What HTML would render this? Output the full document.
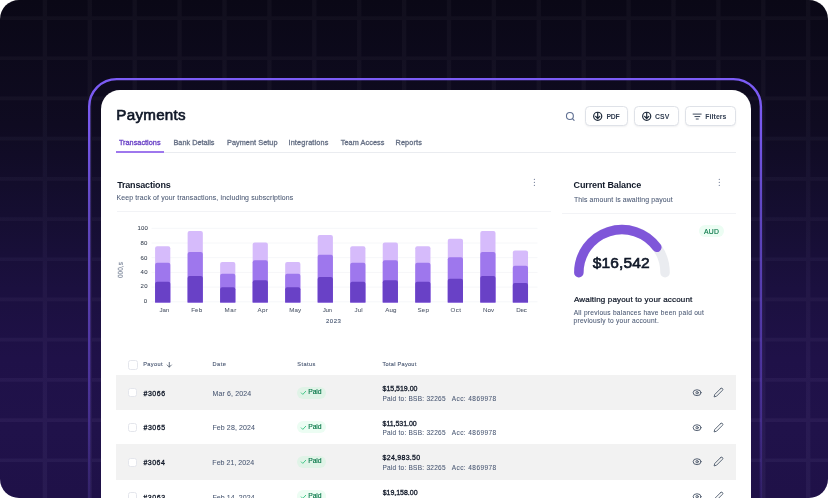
<!DOCTYPE html>
<html lang="en"><head><meta charset="utf-8"><title>Payments</title>
<style>
html,body{margin:0;padding:0;background:#fff;}
body{width:828px;height:498px;overflow:hidden;position:relative;font-family:"Liberation Sans",Arial,sans-serif;}
.bg{position:absolute;left:0;top:0;width:828px;height:498px;border-radius:19px;overflow:hidden;background:linear-gradient(180deg,#0a0816 0%,#0f0b21 25%,#150e31 43%,#1b103f 58%,#1f1148 72%,#20124a 86%,#1f1148 100%);}
.bg svg{position:absolute;left:0;top:0;}
.card{position:absolute;left:101px;top:90px;width:650px;height:420px;background:#fff;border-radius:19px 19px 0 0;}
.t{position:absolute;white-space:nowrap;line-height:1;}
.abs{position:absolute;}
.btn{position:absolute;top:106.1px;height:20.3px;box-sizing:border-box;border:1px solid #dfe2e8;border-radius:4.5px;background:#fff;box-shadow:0 1px 2px rgba(16,24,40,.06);}
.hl{position:absolute;height:1px;background:#eaecf0;}
.row{position:absolute;left:116.3px;width:619.3px;height:34.85px;background:#f2f2f2;}
.cb{position:absolute;left:128.4px;width:9px;height:9px;box-sizing:border-box;border:0.8px solid #e4e6ec;border-radius:2.5px;background:#fff;}
.badge{position:absolute;left:296.9px;width:29.3px;height:12.3px;border-radius:6.2px;background:#e0f3e7;}
.badge.w{background:#ecfdf3;}
#texts{position:absolute;left:0;top:0;width:828px;height:498px;will-change:transform;}

</style></head><body>
<div class="bg"><svg width="828" height="498" viewBox="0 0 828 498">
<defs><filter id="gb" x="-2%" y="-2%" width="104%" height="104%"><feGaussianBlur stdDeviation="0.6"/></filter>
<linearGradient id="gg" x1="0" y1="0" x2="0" y2="498" gradientUnits="userSpaceOnUse"><stop offset="0" stop-color="#e6e0ff" stop-opacity="0.031"/><stop offset="0.45" stop-color="#d6ccff" stop-opacity="0.036"/><stop offset="1" stop-color="#cfc4ff" stop-opacity="0.054"/></linearGradient></defs>
<path fill="url(#gg)" filter="url(#gb)" d="M42.75 0h4.3v498h-4.3zM87.65 0h4.3v498h-4.3zM132.55 0h4.3v498h-4.3zM177.45 0h4.3v498h-4.3zM222.35 0h4.3v498h-4.3zM267.25 0h4.3v498h-4.3zM312.15 0h4.3v498h-4.3zM357.05 0h4.3v498h-4.3zM401.95 0h4.3v498h-4.3zM446.85 0h4.3v498h-4.3zM491.75 0h4.3v498h-4.3zM536.65 0h4.3v498h-4.3zM581.55 0h4.3v498h-4.3zM626.45 0h4.3v498h-4.3zM671.35 0h4.3v498h-4.3zM716.25 0h4.3v498h-4.3zM761.15 0h4.3v498h-4.3zM806.05 0h4.3v498h-4.3zM0 16.20h828v3.7h-828zM0 56.40h828v3.7h-828zM0 96.60h828v3.7h-828zM0 136.80h828v3.7h-828zM0 177.00h828v3.7h-828zM0 217.20h828v3.7h-828zM0 257.40h828v3.7h-828zM0 297.60h828v3.7h-828zM0 337.80h828v3.7h-828zM0 378.00h828v3.7h-828zM0 418.20h828v3.7h-828zM0 458.40h828v3.7h-828z"/>
<defs><linearGradient id="fg" x1="0" y1="78" x2="0" y2="498" gradientUnits="userSpaceOnUse"><stop offset="0" stop-color="#7c5cf6"/><stop offset="0.12" stop-color="#7c5cf6" stop-opacity="0.95"/><stop offset="0.31" stop-color="#7a5af4" stop-opacity="0.74"/><stop offset="0.53" stop-color="#7856f0" stop-opacity="0.6"/><stop offset="0.77" stop-color="#7652ee" stop-opacity="0.42"/><stop offset="1" stop-color="#744fec" stop-opacity="0.14"/></linearGradient></defs>
<rect x="89.2" y="79.1" width="671.7" height="460" rx="27.5" ry="27.5" fill="none" stroke="url(#fg)" stroke-width="2.4"/>
</svg></div>
<div class="card"></div>
<svg class="abs" style="left:560px;top:104px" width="180" height="26" viewBox="560 104 180 26">
<g fill="none" stroke="#5f6f92" stroke-width="1.1" stroke-linecap="round"><circle cx="569.9" cy="116" r="3.45"/><path d="M572.7 118.8 L574.1 120.3"/></g>
</svg>
<div class="btn" style="left:585px;width:43px"></div>
<div class="btn" style="left:634.3px;width:44.4px"></div>
<div class="btn" style="left:684.5px;width:51.2px"></div>
<svg class="abs" style="left:580px;top:104px" width="160" height="26" viewBox="580 104 160 26"><g fill="none" stroke="#1d2939" stroke-width="1.2" stroke-linecap="round" stroke-linejoin="round">
<circle cx="597.7" cy="116.3" r="4.05"/><path d="M597.7 112.6 V118.4 M595.60 116.4 L597.7 118.5 L599.80 116.4"/>
<circle cx="646.7" cy="116.3" r="4.05"/><path d="M646.7 112.6 V118.4 M644.60 116.4 L646.7 118.5 L648.80 116.4"/>
<path stroke="#344054" stroke-width="0.95" d="M693.1 114.1 H701.2 M694.9 116.55 H699.8 M696.2 119 H698.3"/>
</g></svg>
<div class="hl" style="left:116.5px;top:152px;width:619.2px"></div>
<div class="abs" style="left:116.3px;top:150.7px;width:47.7px;height:2px;background:#9e77ed"></div>
<div class="hl" style="left:116.5px;top:211px;width:434.3px;background:#f2f3f6"></div>
<div class="hl" style="left:562.3px;top:213px;width:173.5px;background:#f2f3f6"></div>
<svg class="abs" style="left:110px;top:215px" width="450" height="100" viewBox="110 215 450 100">
<g stroke="#f6f7f9" stroke-width="1">
<path d="M151.5 228.30 H537.5"/>
<path d="M151.5 243.00 H537.5"/>
<path d="M151.5 257.70 H537.5"/>
<path d="M151.5 272.40 H537.5"/>
<path d="M151.5 287.10 H537.5"/>
<path d="M151.5 301.80 H537.5"/>
</g>
<path fill="#d6bbfb" d="M155.10 302.5 V248.30 Q155.10 246.30 157.10 246.30 H168.30 Q170.30 246.30 170.30 248.30 V302.5 Z"/>
<path fill="#9e77ed" d="M155.10 302.5 V264.80 Q155.10 262.80 157.10 262.80 H168.30 Q170.30 262.80 170.30 264.80 V302.5 Z"/>
<path fill="#6941c6" d="M155.10 302.5 V283.70 Q155.10 281.70 157.10 281.70 H168.30 Q170.30 281.70 170.30 283.70 V302.5 Z"/>
<path fill="#d6bbfb" d="M187.62 302.5 V232.90 Q187.62 230.90 189.62 230.90 H200.82 Q202.82 230.90 202.82 232.90 V302.5 Z"/>
<path fill="#9e77ed" d="M187.62 302.5 V254.10 Q187.62 252.10 189.62 252.10 H200.82 Q202.82 252.10 202.82 254.10 V302.5 Z"/>
<path fill="#6941c6" d="M187.62 302.5 V277.90 Q187.62 275.90 189.62 275.90 H200.82 Q202.82 275.90 202.82 277.90 V302.5 Z"/>
<path fill="#d6bbfb" d="M220.14 302.5 V264.00 Q220.14 262.00 222.14 262.00 H233.34 Q235.34 262.00 235.34 264.00 V302.5 Z"/>
<path fill="#9e77ed" d="M220.14 302.5 V275.80 Q220.14 273.80 222.14 273.80 H233.34 Q235.34 273.80 235.34 275.80 V302.5 Z"/>
<path fill="#6941c6" d="M220.14 302.5 V289.20 Q220.14 287.20 222.14 287.20 H233.34 Q235.34 287.20 235.34 289.20 V302.5 Z"/>
<path fill="#d6bbfb" d="M252.66 302.5 V244.50 Q252.66 242.50 254.66 242.50 H265.86 Q267.86 242.50 267.86 244.50 V302.5 Z"/>
<path fill="#9e77ed" d="M252.66 302.5 V262.20 Q252.66 260.20 254.66 260.20 H265.86 Q267.86 260.20 267.86 262.20 V302.5 Z"/>
<path fill="#6941c6" d="M252.66 302.5 V282.20 Q252.66 280.20 254.66 280.20 H265.86 Q267.86 280.20 267.86 282.20 V302.5 Z"/>
<path fill="#d6bbfb" d="M285.18 302.5 V264.00 Q285.18 262.00 287.18 262.00 H298.38 Q300.38 262.00 300.38 264.00 V302.5 Z"/>
<path fill="#9e77ed" d="M285.18 302.5 V275.80 Q285.18 273.80 287.18 273.80 H298.38 Q300.38 273.80 300.38 275.80 V302.5 Z"/>
<path fill="#6941c6" d="M285.18 302.5 V289.20 Q285.18 287.20 287.18 287.20 H298.38 Q300.38 287.20 300.38 289.20 V302.5 Z"/>
<path fill="#d6bbfb" d="M317.70 302.5 V237.00 Q317.70 235.00 319.70 235.00 H330.90 Q332.90 235.00 332.90 237.00 V302.5 Z"/>
<path fill="#9e77ed" d="M317.70 302.5 V256.70 Q317.70 254.70 319.70 254.70 H330.90 Q332.90 254.70 332.90 256.70 V302.5 Z"/>
<path fill="#6941c6" d="M317.70 302.5 V279.00 Q317.70 277.00 319.70 277.00 H330.90 Q332.90 277.00 332.90 279.00 V302.5 Z"/>
<path fill="#d6bbfb" d="M350.22 302.5 V248.30 Q350.22 246.30 352.22 246.30 H363.42 Q365.42 246.30 365.42 248.30 V302.5 Z"/>
<path fill="#9e77ed" d="M350.22 302.5 V264.80 Q350.22 262.80 352.22 262.80 H363.42 Q365.42 262.80 365.42 264.80 V302.5 Z"/>
<path fill="#6941c6" d="M350.22 302.5 V283.70 Q350.22 281.70 352.22 281.70 H363.42 Q365.42 281.70 365.42 283.70 V302.5 Z"/>
<path fill="#d6bbfb" d="M382.74 302.5 V244.50 Q382.74 242.50 384.74 242.50 H395.94 Q397.94 242.50 397.94 244.50 V302.5 Z"/>
<path fill="#9e77ed" d="M382.74 302.5 V262.20 Q382.74 260.20 384.74 260.20 H395.94 Q397.94 260.20 397.94 262.20 V302.5 Z"/>
<path fill="#6941c6" d="M382.74 302.5 V282.20 Q382.74 280.20 384.74 280.20 H395.94 Q397.94 280.20 397.94 282.20 V302.5 Z"/>
<path fill="#d6bbfb" d="M415.26 302.5 V248.30 Q415.26 246.30 417.26 246.30 H428.46 Q430.46 246.30 430.46 248.30 V302.5 Z"/>
<path fill="#9e77ed" d="M415.26 302.5 V264.80 Q415.26 262.80 417.26 262.80 H428.46 Q430.46 262.80 430.46 264.80 V302.5 Z"/>
<path fill="#6941c6" d="M415.26 302.5 V283.70 Q415.26 281.70 417.26 281.70 H428.46 Q430.46 281.70 430.46 283.70 V302.5 Z"/>
<path fill="#d6bbfb" d="M447.78 302.5 V240.80 Q447.78 238.80 449.78 238.80 H460.98 Q462.98 238.80 462.98 240.80 V302.5 Z"/>
<path fill="#9e77ed" d="M447.78 302.5 V259.30 Q447.78 257.30 449.78 257.30 H460.98 Q462.98 257.30 462.98 259.30 V302.5 Z"/>
<path fill="#6941c6" d="M447.78 302.5 V280.80 Q447.78 278.80 449.78 278.80 H460.98 Q462.98 278.80 462.98 280.80 V302.5 Z"/>
<path fill="#d6bbfb" d="M480.30 302.5 V232.90 Q480.30 230.90 482.30 230.90 H493.50 Q495.50 230.90 495.50 232.90 V302.5 Z"/>
<path fill="#9e77ed" d="M480.30 302.5 V254.10 Q480.30 252.10 482.30 252.10 H493.50 Q495.50 252.10 495.50 254.10 V302.5 Z"/>
<path fill="#6941c6" d="M480.30 302.5 V277.90 Q480.30 275.90 482.30 275.90 H493.50 Q495.50 275.90 495.50 277.90 V302.5 Z"/>
<path fill="#d6bbfb" d="M512.82 302.5 V252.40 Q512.82 250.40 514.82 250.40 H526.02 Q528.02 250.40 528.02 252.40 V302.5 Z"/>
<path fill="#9e77ed" d="M512.82 302.5 V267.70 Q512.82 265.70 514.82 265.70 H526.02 Q528.02 265.70 528.02 267.70 V302.5 Z"/>
<path fill="#6941c6" d="M512.82 302.5 V285.10 Q512.82 283.10 514.82 283.10 H526.02 Q528.02 283.10 528.02 285.10 V302.5 Z"/>
</svg>
<span class="t" style="left:121.1px;top:269.6px;font-size:6.4px;color:#4a5873;transform:translate(-50%,-50%) rotate(-90deg);letter-spacing:0.05px;will-change:transform">000,s</span>
<svg class="abs" style="left:530px;top:176px" width="200" height="14" viewBox="530 176 200 14"><g fill="#6b7691">
<circle cx="534.4" cy="179.3" r="0.62"/>
<circle cx="534.4" cy="182.3" r="0.62"/>
<circle cx="534.4" cy="185.3" r="0.62"/>
<circle cx="719.3" cy="179.3" r="0.62"/>
<circle cx="719.3" cy="182.3" r="0.62"/>
<circle cx="719.3" cy="185.3" r="0.62"/>
</g></svg>
<svg class="abs" style="left:565px;top:220px" width="115" height="62" viewBox="565 220 115 62"><g fill="none" stroke-width="9.5" stroke-linecap="round">
<path stroke="#eaecf0" d="M578.85 272.65 A43.1 43.1 0 0 1 665.05 272.65"/>
<path stroke="#7f56d9" d="M578.85 272.65 A43.1 43.1 0 0 1 656.82 247.32"/>
</g></svg>
<div class="badge w" style="left:699.4px;top:224.9px;width:24.7px;height:12.1px"></div>
<div class="cb" style="top:360.3px;left:128.3px;width:9.3px;height:9.3px"></div>
<svg class="abs" style="left:165px;top:360px" width="10" height="10" viewBox="165 360 10 10"><path fill="none" stroke="#475467" stroke-width="0.8" stroke-linecap="round" stroke-linejoin="round" d="M169.3 362.4 V367 M167.2 365 L169.3 367.1 L171.4 365"/></svg>
<div class="row" style="top:374.9px;height:35.5px"></div>
<div class="cb" style="top:388.40px"></div>
<div class="badge" style="top:386.50px"></div>
<svg class="abs" style="left:296px;top:385.00px" width="440" height="16" viewBox="296 10 440 16">
<path fill="none" stroke="#47c98b" stroke-width="1.0" stroke-linecap="round" stroke-linejoin="round" d="M301.3 17.9 L302.8 19.4 L305.7 16.3"/>
<g fill="none" stroke="#475467" stroke-width="0.9" stroke-linecap="round" stroke-linejoin="round">
<ellipse cx="697.1" cy="17.7" rx="3.95" ry="2.95"/><circle cx="697.1" cy="17.7" r="1.2"/>
<path transform="translate(713.22 12.22) scale(0.44)" stroke-width="2.0" d="M17 3a2.828 2.828 0 1 1 4 4L7.5 20.5 2 22l1.5-5.5L17 3z"/>
</g></svg>
<div class="cb" style="top:423.00px"></div>
<div class="badge w" style="top:421.10px"></div>
<svg class="abs" style="left:296px;top:419.60px" width="440" height="16" viewBox="296 10 440 16">
<path fill="none" stroke="#47c98b" stroke-width="1.0" stroke-linecap="round" stroke-linejoin="round" d="M301.3 17.9 L302.8 19.4 L305.7 16.3"/>
<g fill="none" stroke="#475467" stroke-width="0.9" stroke-linecap="round" stroke-linejoin="round">
<ellipse cx="697.1" cy="17.7" rx="3.95" ry="2.95"/><circle cx="697.1" cy="17.7" r="1.2"/>
<path transform="translate(713.22 12.22) scale(0.44)" stroke-width="2.0" d="M17 3a2.828 2.828 0 1 1 4 4L7.5 20.5 2 22l1.5-5.5L17 3z"/>
</g></svg>
<div class="row" style="top:444.3px;height:35.7px"></div>
<div class="cb" style="top:457.60px"></div>
<div class="badge" style="top:455.70px"></div>
<svg class="abs" style="left:296px;top:454.20px" width="440" height="16" viewBox="296 10 440 16">
<path fill="none" stroke="#47c98b" stroke-width="1.0" stroke-linecap="round" stroke-linejoin="round" d="M301.3 17.9 L302.8 19.4 L305.7 16.3"/>
<g fill="none" stroke="#475467" stroke-width="0.9" stroke-linecap="round" stroke-linejoin="round">
<ellipse cx="697.1" cy="17.7" rx="3.95" ry="2.95"/><circle cx="697.1" cy="17.7" r="1.2"/>
<path transform="translate(713.22 12.22) scale(0.44)" stroke-width="2.0" d="M17 3a2.828 2.828 0 1 1 4 4L7.5 20.5 2 22l1.5-5.5L17 3z"/>
</g></svg>
<div class="cb" style="top:492.20px"></div>
<div class="badge w" style="top:490.30px"></div>
<svg class="abs" style="left:296px;top:488.80px" width="440" height="16" viewBox="296 10 440 16">
<path fill="none" stroke="#47c98b" stroke-width="1.0" stroke-linecap="round" stroke-linejoin="round" d="M301.3 17.9 L302.8 19.4 L305.7 16.3"/>
<g fill="none" stroke="#475467" stroke-width="0.9" stroke-linecap="round" stroke-linejoin="round">
<ellipse cx="697.1" cy="17.7" rx="3.95" ry="2.95"/><circle cx="697.1" cy="17.7" r="1.2"/>
<path transform="translate(713.22 12.22) scale(0.44)" stroke-width="2.0" d="M17 3a2.828 2.828 0 1 1 4 4L7.5 20.5 2 22l1.5-5.5L17 3z"/>
</g></svg>
<div id="texts">
<span class="t" style="left:116.36px;top:107.05px;font-size:15.2px;font-weight:400;-webkit-text-stroke:0.638px currentColor;color:#101828;letter-spacing:0.247px">Payments</span>
<span class="t" style="left:118.91px;top:139.05px;font-size:7.3px;font-weight:400;-webkit-text-stroke:0.307px currentColor;color:#6941c6;letter-spacing:0.012px">Transactions</span>
<span class="t" style="left:173.47px;top:139.05px;font-size:7.3px;font-weight:400;-webkit-text-stroke:0.307px currentColor;color:#667085;letter-spacing:0.007px">Bank Details</span>
<span class="t" style="left:226.97px;top:139.05px;font-size:7.3px;font-weight:400;-webkit-text-stroke:0.307px currentColor;color:#667085;letter-spacing:0.056px">Payment Setup</span>
<span class="t" style="left:288.45px;top:139.05px;font-size:7.3px;font-weight:400;-webkit-text-stroke:0.307px currentColor;color:#667085;letter-spacing:0.174px">Integrations</span>
<span class="t" style="left:340.75px;top:139.05px;font-size:7.3px;font-weight:400;-webkit-text-stroke:0.307px currentColor;color:#667085;letter-spacing:0.066px">Team Access</span>
<span class="t" style="left:395.49px;top:139.05px;font-size:7.3px;font-weight:400;-webkit-text-stroke:0.307px currentColor;color:#667085;letter-spacing:0.146px">Reports</span>
<span class="t" style="left:606.49px;top:114.05px;font-size:6.9px;font-weight:700;color:#344054;letter-spacing:-0.264px">PDF</span>
<span class="t" style="left:654.92px;top:114.05px;font-size:6.9px;font-weight:700;color:#344054;letter-spacing:0.120px">CSV</span>
<span class="t" style="left:705.34px;top:114.05px;font-size:6.9px;font-weight:700;color:#344054;letter-spacing:0.064px">Filters</span>
<span class="t" style="left:117.13px;top:181.05px;font-size:9.0px;font-weight:700;color:#101828;letter-spacing:-0.171px">Transactions</span>
<span class="t" style="left:116.50px;top:195.05px;font-size:6.9px;font-weight:400;-webkit-text-stroke:0.069px currentColor;color:#4a5873;letter-spacing:0.157px">Keep track of your transactions, including subscriptions</span>
<span class="t" style="left:573.58px;top:181.05px;font-size:9.0px;font-weight:700;color:#101828;letter-spacing:-0.139px">Current Balance</span>
<span class="t" style="left:573.92px;top:197.05px;font-size:6.9px;font-weight:400;-webkit-text-stroke:0.069px currentColor;color:#4a5873;letter-spacing:0.143px">This amount is awaiting payout</span>
<span class="t" style="left:592.70px;top:255.05px;font-size:15.5px;font-weight:400;-webkit-text-stroke:0.651px currentColor;color:#101828;letter-spacing:0.151px">$16,542</span>
<span class="t" style="left:704.05px;top:229.05px;font-size:6.8px;font-weight:400;-webkit-text-stroke:0.136px currentColor;color:#067647;letter-spacing:0.195px">AUD</span>
<span class="t" style="left:573.98px;top:296.05px;font-size:8.0px;font-weight:400;-webkit-text-stroke:0.240px currentColor;color:#101828;letter-spacing:0.167px">Awaiting payout to your account</span>
<span class="t" style="left:573.72px;top:310.05px;font-size:6.6px;font-weight:400;-webkit-text-stroke:0.066px currentColor;color:#4a5873;letter-spacing:0.253px">All previous balances have been paid out</span>
<span class="t" style="left:573.50px;top:318.05px;font-size:6.6px;font-weight:400;-webkit-text-stroke:0.066px currentColor;color:#4a5873;letter-spacing:0.264px">previously to your account.</span>
<span class="t" style="left:143.28px;top:362.05px;font-size:5.6px;font-weight:400;-webkit-text-stroke:0.112px currentColor;color:#4a5873;letter-spacing:0.351px">Payout</span>
<span class="t" style="left:212.57px;top:362.05px;font-size:5.6px;font-weight:400;-webkit-text-stroke:0.112px currentColor;color:#4a5873;letter-spacing:0.471px">Date</span>
<span class="t" style="left:297.31px;top:362.05px;font-size:5.6px;font-weight:400;-webkit-text-stroke:0.112px currentColor;color:#4a5873;letter-spacing:0.421px">Status</span>
<span class="t" style="left:382.52px;top:362.05px;font-size:5.6px;font-weight:400;-webkit-text-stroke:0.112px currentColor;color:#4a5873;letter-spacing:0.270px">Total Payout</span>
<span class="t" style="left:325.98px;top:318.05px;font-size:6.0px;font-weight:400;-webkit-text-stroke:0.120px currentColor;color:#4a5873;letter-spacing:0.531px">2023</span>
<span class="t" style="left:137.49px;top:225.05px;font-size:6.0px;font-weight:400;-webkit-text-stroke:0.060px currentColor;color:#3a4352;letter-spacing:0.169px">100</span>
<span class="t" style="left:140.51px;top:240.05px;font-size:6.0px;font-weight:400;-webkit-text-stroke:0.060px currentColor;color:#3a4352;letter-spacing:0.107px">80</span>
<span class="t" style="left:140.44px;top:255.05px;font-size:6.0px;font-weight:400;-webkit-text-stroke:0.060px currentColor;color:#3a4352;letter-spacing:0.313px">60</span>
<span class="t" style="left:140.52px;top:269.05px;font-size:6.0px;font-weight:400;-webkit-text-stroke:0.060px currentColor;color:#3a4352;letter-spacing:0.281px">40</span>
<span class="t" style="left:140.47px;top:283.05px;font-size:6.0px;font-weight:400;-webkit-text-stroke:0.060px currentColor;color:#3a4352;letter-spacing:0.568px">20</span>
<span class="t" style="left:143.76px;top:298.05px;font-size:6.0px;font-weight:400;-webkit-text-stroke:0.060px currentColor;color:#3a4352;letter-spacing:0.556px">0</span>
<span class="t" style="left:159.41px;top:307.05px;font-size:6.2px;font-weight:400;-webkit-text-stroke:0.062px currentColor;color:#505a6b;letter-spacing:-0.040px">Jan</span>
<span class="t" style="left:191.19px;top:307.05px;font-size:6.2px;font-weight:400;-webkit-text-stroke:0.062px currentColor;color:#505a6b;letter-spacing:0.113px">Feb</span>
<span class="t" style="left:224.45px;top:307.05px;font-size:6.2px;font-weight:400;-webkit-text-stroke:0.062px currentColor;color:#505a6b;letter-spacing:0.578px">Mar</span>
<span class="t" style="left:257.60px;top:307.05px;font-size:6.2px;font-weight:400;-webkit-text-stroke:0.062px currentColor;color:#505a6b;letter-spacing:0.288px">Apr</span>
<span class="t" style="left:289.17px;top:307.05px;font-size:6.2px;font-weight:400;-webkit-text-stroke:0.062px currentColor;color:#505a6b;letter-spacing:0.116px">May</span>
<span class="t" style="left:322.71px;top:307.05px;font-size:6.2px;font-weight:400;-webkit-text-stroke:0.062px currentColor;color:#505a6b;letter-spacing:-0.379px">Jun</span>
<span class="t" style="left:354.48px;top:307.05px;font-size:6.2px;font-weight:400;-webkit-text-stroke:0.062px currentColor;color:#505a6b;letter-spacing:0.176px">Jul</span>
<span class="t" style="left:385.20px;top:307.05px;font-size:6.2px;font-weight:400;-webkit-text-stroke:0.062px currentColor;color:#505a6b;letter-spacing:0.061px">Aug</span>
<span class="t" style="left:417.53px;top:307.05px;font-size:6.2px;font-weight:400;-webkit-text-stroke:0.062px currentColor;color:#505a6b;letter-spacing:0.160px">Sep</span>
<span class="t" style="left:450.52px;top:307.05px;font-size:6.2px;font-weight:400;-webkit-text-stroke:0.062px currentColor;color:#505a6b;letter-spacing:0.428px">Oct</span>
<span class="t" style="left:482.94px;top:307.05px;font-size:6.2px;font-weight:400;-webkit-text-stroke:0.062px currentColor;color:#505a6b;letter-spacing:0.131px">Nov</span>
<span class="t" style="left:516.37px;top:307.05px;font-size:6.2px;font-weight:400;-webkit-text-stroke:0.062px currentColor;color:#505a6b;letter-spacing:-0.228px">Dec</span>
<span class="t" style="left:143.53px;top:390.05px;font-size:7.0px;font-weight:400;-webkit-text-stroke:0.294px currentColor;color:#101828;letter-spacing:0.522px">#3066</span>
<span class="t" style="left:212.47px;top:390.05px;font-size:7.0px;font-weight:400;-webkit-text-stroke:0.070px currentColor;color:#4a5873;letter-spacing:0.126px">Mar 6, 2024</span>
<span class="t" style="left:308.20px;top:389.05px;font-size:6.8px;font-weight:400;-webkit-text-stroke:0.136px currentColor;color:#067647;letter-spacing:-0.089px">Paid</span>
<span class="t" style="left:382.58px;top:385.05px;font-size:7.0px;font-weight:400;-webkit-text-stroke:0.294px currentColor;color:#101828;letter-spacing:-0.020px">$15,519.00</span>
<span class="t" style="left:382.38px;top:396.05px;font-size:6.5px;font-weight:400;-webkit-text-stroke:0.065px currentColor;color:#4a5873;letter-spacing:0.256px">Paid to: BSB: 32265</span>
<span class="t" style="left:451.69px;top:396.05px;font-size:6.5px;font-weight:400;-webkit-text-stroke:0.065px currentColor;color:#4a5873;letter-spacing:0.431px">Acc: 4869978</span>
<span class="t" style="left:143.52px;top:424.05px;font-size:7.0px;font-weight:400;-webkit-text-stroke:0.294px currentColor;color:#101828;letter-spacing:0.516px">#3065</span>
<span class="t" style="left:212.41px;top:424.05px;font-size:7.0px;font-weight:400;-webkit-text-stroke:0.070px currentColor;color:#4a5873;letter-spacing:0.114px">Feb 28, 2024</span>
<span class="t" style="left:308.20px;top:424.05px;font-size:6.8px;font-weight:400;-webkit-text-stroke:0.136px currentColor;color:#067647;letter-spacing:-0.089px">Paid</span>
<span class="t" style="left:382.58px;top:420.05px;font-size:7.0px;font-weight:400;-webkit-text-stroke:0.294px currentColor;color:#101828;letter-spacing:-0.047px">$11,531.00</span>
<span class="t" style="left:382.38px;top:430.05px;font-size:6.5px;font-weight:400;-webkit-text-stroke:0.065px currentColor;color:#4a5873;letter-spacing:0.256px">Paid to: BSB: 32265</span>
<span class="t" style="left:451.69px;top:430.05px;font-size:6.5px;font-weight:400;-webkit-text-stroke:0.065px currentColor;color:#4a5873;letter-spacing:0.431px">Acc: 4869978</span>
<span class="t" style="left:143.41px;top:459.05px;font-size:7.0px;font-weight:400;-webkit-text-stroke:0.294px currentColor;color:#101828;letter-spacing:0.476px">#3064</span>
<span class="t" style="left:212.37px;top:459.05px;font-size:7.0px;font-weight:400;-webkit-text-stroke:0.070px currentColor;color:#4a5873;letter-spacing:0.040px">Feb 21, 2024</span>
<span class="t" style="left:308.20px;top:458.05px;font-size:6.8px;font-weight:400;-webkit-text-stroke:0.136px currentColor;color:#067647;letter-spacing:-0.089px">Paid</span>
<span class="t" style="left:382.60px;top:454.05px;font-size:7.0px;font-weight:400;-webkit-text-stroke:0.294px currentColor;color:#101828;letter-spacing:0.276px">$24,983.50</span>
<span class="t" style="left:382.38px;top:465.05px;font-size:6.5px;font-weight:400;-webkit-text-stroke:0.065px currentColor;color:#4a5873;letter-spacing:0.256px">Paid to: BSB: 32265</span>
<span class="t" style="left:451.69px;top:465.05px;font-size:6.5px;font-weight:400;-webkit-text-stroke:0.065px currentColor;color:#4a5873;letter-spacing:0.431px">Acc: 4869978</span>
<span class="t" style="left:143.32px;top:494.05px;font-size:7.0px;font-weight:400;-webkit-text-stroke:0.294px currentColor;color:#101828;letter-spacing:0.576px">#3063</span>
<span class="t" style="left:212.46px;top:494.05px;font-size:7.0px;font-weight:400;-webkit-text-stroke:0.070px currentColor;color:#4a5873;letter-spacing:0.091px">Feb 14, 2024</span>
<span class="t" style="left:308.20px;top:493.05px;font-size:6.8px;font-weight:400;-webkit-text-stroke:0.136px currentColor;color:#067647;letter-spacing:-0.089px">Paid</span>
<span class="t" style="left:382.63px;top:489.05px;font-size:7.0px;font-weight:400;-webkit-text-stroke:0.294px currentColor;color:#101828;letter-spacing:-0.009px">$19,158.00</span>
<span class="t" style="left:382.70px;top:499.05px;font-size:6.5px;font-weight:400;-webkit-text-stroke:0.065px currentColor;color:#4a5873;letter-spacing:0.242px">Paid to: BSB: 32265</span>
<span class="t" style="left:451.70px;top:499.05px;font-size:6.5px;font-weight:400;-webkit-text-stroke:0.065px currentColor;color:#4a5873;letter-spacing:0.432px">Acc: 4869978</span>
</div>
</body></html>
